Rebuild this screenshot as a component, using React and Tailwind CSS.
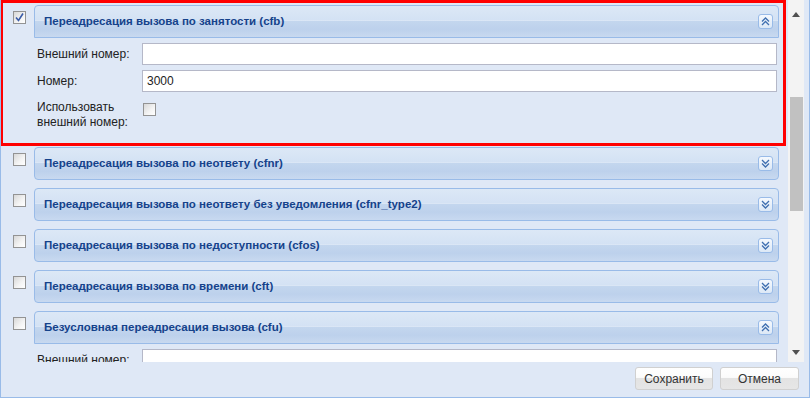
import React from 'react'

const ITEMS = [
  { title: 'Переадресация вызова по занятости (cfb)', open: true, checked: true, number: '3000', full: true },
  { title: 'Переадресация вызова по неответу (cfnr)' },
  { title: 'Переадресация вызова по неответу без уведомления (cfnr_type2)' },
  { title: 'Переадресация вызова по недоступности (cfos)' },
  { title: 'Переадресация вызова по времени (cft)' },
  { title: 'Безусловная переадресация вызова (cfu)', open: true },
]

function CheckBox({ checked }) {
  return (
    <div className="w-[13px] h-[13px] border border-[#939393] bg-[linear-gradient(135deg,#d8d8d8_0%,#f4f4f4_60%,#ffffff_100%)] flex items-center justify-center">
      {checked && (
        <svg width="9" height="9" viewBox="0 0 9 9" fill="none">
          <path d="M1 4.5 L3.5 7.5 L8 0.5" stroke="#3a5ca8" strokeWidth="1.6" />
        </svg>
      )}
    </div>
  )
}

function Toggle({ open }) {
  return (
    <div className="w-[15px] h-[15px] rounded-[3px] border border-[#99bbe8] bg-[linear-gradient(to_bottom,#f5f9fe,#dce8f6)] flex items-center justify-center">
      <svg width="9" height="9" viewBox="0 0 9 9" fill="none" stroke="#3f6fb0" strokeWidth="1.3">
        {open ? (
          <>
            <path d="M1 4.5 L4.5 1 L8 4.5" />
            <path d="M1 8 L4.5 4.5 L8 8" />
          </>
        ) : (
          <>
            <path d="M1 1 L4.5 4.5 L8 1" />
            <path d="M1 4.5 L4.5 8 L8 4.5" />
          </>
        )}
      </svg>
    </div>
  )
}

function Field({ label, value }) {
  return (
    <div className="flex items-center h-[22px]">
      <div className="w-[105px] text-[12px] text-[#222]">{label}</div>
      <div className="flex-1 h-[22px] bg-white border border-[#b5b8c8] pl-[4px] flex items-center text-[12px] text-[#222]">
        {value}
      </div>
    </div>
  )
}

function Item({ item }) {
  return (
    <div className="flex mb-[8px]">
      <div className="w-[33px] shrink-0 pl-[12px] pt-[6px]">
        <CheckBox checked={item.checked} />
      </div>
      <div className="flex-1 mr-[9px]">
        <div
          className={
            'h-[33px] border border-[#99bbe8] bg-[linear-gradient(to_bottom,#dce8f6_0%,#d4e2f4_44%,#e0eaf7_46%,#c3d6ee_50%,#bdd1ec_75%,#c8d9f0_100%)] flex items-center justify-between pl-[9px] pr-[5px] ' +
            (item.open ? 'rounded-t-[4px]' : 'rounded-[4px]')
          }
        >
          <span className="text-[11.5px] font-bold text-[#15428b] pt-[1px]">{item.title}</span>
          <Toggle open={item.open} />
        </div>
        {item.open && (
          <div className="pt-[5px] pl-[3px] pr-[2px] pb-[9px]">
            <Field label="Внешний номер:" value="" />
            {item.full && (
              <>
                <div className="mt-[5px]">
                  <Field label="Номер:" value={item.number} />
                </div>
                <div className="flex mt-[8px]">
                  <div className="w-[105px] text-[12px] leading-[15px] text-[#222]">
                    Использовать
                    <br />
                    внешний номер:
                  </div>
                  <div className="pt-[3px] pl-[1px]">
                    <CheckBox />
                  </div>
                </div>
              </>
            )}
          </div>
        )}
      </div>
    </div>
  )
}

function Scrollbar() {
  return (
    <div className="w-[16px] shrink-0 bg-[#f3f3f3] flex flex-col items-center">
      <svg width="8" height="5" viewBox="0 0 8 5" className="mt-[12px]">
        <path d="M0 5 L4 0 L8 5 Z" fill="#505050" />
      </svg>
      <div className="w-[13px] h-[114px] bg-[#c1c1c1] mt-[80px] ml-[1px]" />
      <div className="flex-1" />
      <svg width="8" height="5" viewBox="0 0 8 5" className="mb-[7px]">
        <path d="M0 0 L8 0 L4 5 Z" fill="#505050" />
      </svg>
    </div>
  )
}

function Button({ children, w }) {
  return (
    <button className={'h-[23px] rounded-[3px] border border-[#d0d0d0] bg-[linear-gradient(to_bottom,#ffffff_0%,#fbfbfb_45%,#e3e3e3_50%,#e6e6e6_100%)] text-[12px] text-[#333] ' + w}>
      {children}
    </button>
  )
}

export default function App() {
  return (
    <div className="relative w-[810px] h-[398px] bg-[#dfe8f6] border-l border-r border-b border-[#99bbe8] flex flex-col overflow-hidden font-['Liberation_Sans',Arial,sans-serif]">
      <div className="flex h-[362px] shrink-0">
        <div className="w-[787px] overflow-hidden pt-[5px]">
          {ITEMS.map((item, i) => (
            <Item key={i} item={item} />
          ))}
        </div>
        <Scrollbar />
      </div>
      <div className="flex justify-end gap-[7px] pt-[5px] pr-[10px]">
        <Button w="w-[78px]">Сохранить</Button>
        <Button w="w-[79px]">Отмена</Button>
      </div>
      {/* red highlight frame drawn over the first row */}
      <div className="absolute left-[-1px] top-0 w-[786px] h-[146px] border-[3px] border-[#ff0000] pointer-events-none" />
    </div>
  )
}
